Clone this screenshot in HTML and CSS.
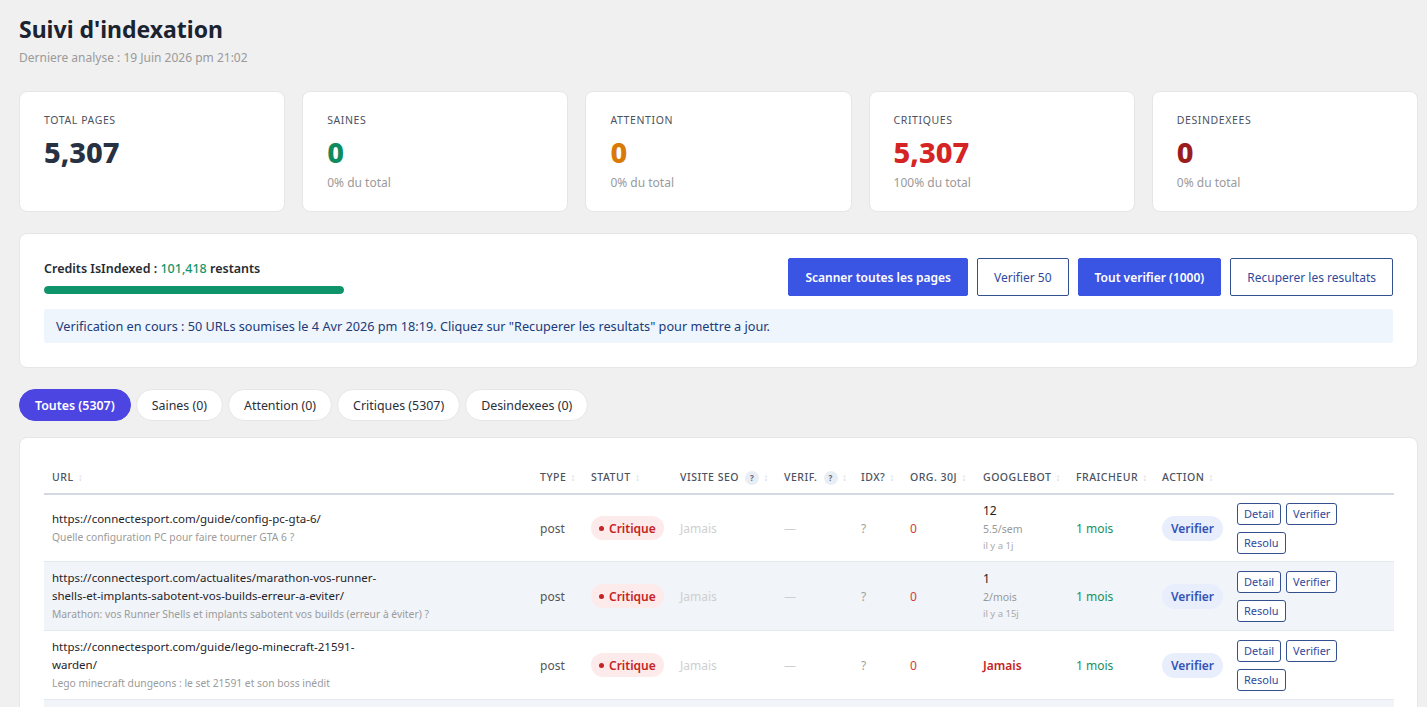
FILE: index.html
```html
<!DOCTYPE html>
<html lang="fr">
<head>
  <meta charset="UTF-8" />
  <meta name="viewport" content="width=device-width, initial-scale=1" />
  <title>Suivi d'indexation</title>
  <link rel="stylesheet" href="styles.css">
</head>
<body>
  <main class="page">

    <header class="page-head">
      <h1>Suivi d'indexation</h1>
      <p class="subtitle">Derniere analyse : 19 Juin 2026 pm 21:02</p>
    </header>

    <section class="stats">
      <div class="stat-card">
        <div class="stat-label">Total pages</div>
        <div class="stat-value">5,307</div>
      </div>
      <div class="stat-card">
        <div class="stat-label">Saines</div>
        <div class="stat-value green">0</div>
        <div class="stat-sub">0% du total</div>
      </div>
      <div class="stat-card">
        <div class="stat-label">Attention</div>
        <div class="stat-value orange">0</div>
        <div class="stat-sub">0% du total</div>
      </div>
      <div class="stat-card">
        <div class="stat-label">Critiques</div>
        <div class="stat-value red">5,307</div>
        <div class="stat-sub">100% du total</div>
      </div>
      <div class="stat-card">
        <div class="stat-label">Desindexees</div>
        <div class="stat-value darkred">0</div>
        <div class="stat-sub">0% du total</div>
      </div>
    </section>

    <section class="card credits">
      <div class="credits-top">
        <div class="credits-info">
          <div class="credits-text">Credits IsIndexed : <span class="credits-num">101,418</span> restants</div>
          <div class="progress"><div class="progress-fill" style="width: 100%"></div></div>
        </div>
        <div class="actions">
          <button class="btn btn-primary">Scanner toutes les pages</button>
          <button class="btn btn-outline">Verifier 50</button>
          <button class="btn btn-primary">Tout verifier (1000)</button>
          <button class="btn btn-outline">Recuperer les resultats</button>
        </div>
      </div>
      <div class="notice">Verification en cours : 50 URLs soumises le 4 Avr 2026 pm 18:19. Cliquez sur "Recuperer les resultats" pour mettre a jour.</div>
    </section>

    <nav class="tabs">
      <button class="tab active">Toutes (5307)</button>
      <button class="tab">Saines (0)</button>
      <button class="tab">Attention (0)</button>
      <button class="tab">Critiques (5307)</button>
      <button class="tab">Desindexees (0)</button>
    </nav>

    <section class="card table-card">
      <table class="pages">
        <colgroup>
          <col style="width: 488px">
          <col style="width: 51px">
          <col style="width: 89px">
          <col style="width: 104px">
          <col style="width: 77px">
          <col style="width: 49px">
          <col style="width: 73px">
          <col style="width: 93px">
          <col style="width: 86px">
          <col style="width: 75px">
          <col style="width: 165px">
        </colgroup>
        <thead>
          <tr>
            <th>URL <span class="sort">↕</span></th>
            <th>Type <span class="sort">↕</span></th>
            <th>Statut <span class="sort">↕</span></th>
            <th>Visite SEO <span class="help">?</span> <span class="sort">↕</span></th>
            <th>Verif. <span class="help">?</span> <span class="sort">↕</span></th>
            <th>Idx? <span class="sort">↕</span></th>
            <th>Org. 30j <span class="sort">↕</span></th>
            <th>Googlebot <span class="sort">↕</span></th>
            <th>Fraicheur <span class="sort">↕</span></th>
            <th>Action <span class="sort">↕</span></th>
            <th></th>
          </tr>
        </thead>
        <tbody>
          <tr>
            <td>
              <div class="url">https://connectesport.com/guide/config-pc-gta-6/</div>
              <div class="url-title">Quelle configuration PC pour faire tourner GTA 6 ?</div>
            </td>
            <td class="muted-dark">post</td>
            <td><span class="badge"><span class="dot"></span>Critique</span></td>
            <td class="faint">Jamais</td>
            <td class="faint">—</td>
            <td class="grey">?</td>
            <td class="zero">0</td>
            <td>
              <div class="bot-count">12</div>
              <div class="bot-rate">5.5/sem</div>
              <div class="bot-last">il y a 1j</div>
            </td>
            <td class="fresh">1 mois</td>
            <td><span class="pill">Verifier</span></td>
            <td>
              <div class="row-btns">
                <button class="mini">Detail</button>
                <button class="mini">Verifier</button>
                <button class="mini">Resolu</button>
              </div>
            </td>
          </tr>
          <tr>
            <td>
              <div class="url">https://connectesport.com/actualites/marathon-vos-runner-shells-et-implants-sabotent-vos-builds-erreur-a-eviter/</div>
              <div class="url-title">Marathon: vos Runner Shells et implants sabotent vos builds (erreur à éviter) ?</div>
            </td>
            <td class="muted-dark">post</td>
            <td><span class="badge"><span class="dot"></span>Critique</span></td>
            <td class="faint">Jamais</td>
            <td class="faint">—</td>
            <td class="grey">?</td>
            <td class="zero">0</td>
            <td>
              <div class="bot-count">1</div>
              <div class="bot-rate">2/mois</div>
              <div class="bot-last">il y a 15j</div>
            </td>
            <td class="fresh">1 mois</td>
            <td><span class="pill">Verifier</span></td>
            <td>
              <div class="row-btns">
                <button class="mini">Detail</button>
                <button class="mini">Verifier</button>
                <button class="mini">Resolu</button>
              </div>
            </td>
          </tr>
          <tr>
            <td>
              <div class="url">https://connectesport.com/guide/lego-minecraft-21591-warden/</div>
              <div class="url-title">Lego minecraft dungeons : le set 21591 et son boss inédit</div>
            </td>
            <td class="muted-dark">post</td>
            <td><span class="badge"><span class="dot"></span>Critique</span></td>
            <td class="faint">Jamais</td>
            <td class="faint">—</td>
            <td class="grey">?</td>
            <td class="zero">0</td>
            <td class="never">Jamais</td>
            <td class="fresh">1 mois</td>
            <td><span class="pill">Verifier</span></td>
            <td>
              <div class="row-btns">
                <button class="mini">Detail</button>
                <button class="mini">Verifier</button>
                <button class="mini">Resolu</button>
              </div>
            </td>
          </tr>
          <tr>
            <td>
              <div class="url">https://connectesport.com/guide/meilleurs-reglages-manette-fortnite/</div>
              <div class="url-title">Les meilleurs reglages manette sur Fortnite</div>
            </td>
            <td class="muted-dark">post</td>
            <td><span class="badge"><span class="dot"></span>Critique</span></td>
            <td class="faint">Jamais</td>
            <td class="faint">—</td>
            <td class="grey">?</td>
            <td class="zero">0</td>
            <td class="never">Jamais</td>
            <td class="fresh">1 mois</td>
            <td><span class="pill">Verifier</span></td>
            <td>
              <div class="row-btns">
                <button class="mini">Detail</button>
                <button class="mini">Verifier</button>
                <button class="mini">Resolu</button>
              </div>
            </td>
          </tr>
        </tbody>
      </table>
    </section>

  </main>
</body>
</html>
```

FILE: styles.css
```css
/* Base */
* {
  box-sizing: border-box;
}

html, body {
  margin: 0;
  overflow: hidden;
}

body {
  font-family: "Noto Sans", "Open Sans", Arial, sans-serif;
  background: #f0f0f0;
  color: #222;
  font-size: 13px;
}

button {
  font-family: inherit;
  cursor: pointer;
}

.page {
  padding: 14px 9px 0 19px;
}

/* En-tete */
.page-head h1 {
  margin: 0;
  font-size: 23px;
  line-height: 30px;
  font-weight: 700;
  color: #1b2230;
}

.subtitle {
  margin: 6px 0 0;
  font-size: 12px;
  line-height: 16px;
  color: #9a9a9a;
}

/* Cartes stats */
.stats {
  display: grid;
  grid-template-columns: repeat(5, 1fr);
  gap: 17px;
  margin-top: 25px;
}

.stat-card {
  background: white;
  border: 1px solid #e4e6e9;
  border-radius: 8px;
  height: 121px;
  padding: 21px 24px;
}

.stat-label {
  font-size: 10.5px;
  line-height: 14px;
  letter-spacing: 0.6px;
  text-transform: uppercase;
  color: #4b5260;
}

.stat-value {
  margin-top: 7px;
  font-size: 29px;
  line-height: 36px;
  font-weight: 800;
  color: #283142;
}

.stat-value.green { color: #0f8c5f; }
.stat-value.orange { color: #d97a08; }
.stat-value.red { color: #d42424; }
.stat-value.darkred { color: #9b1c1c; }

.stat-sub {
  margin-top: 5px;
  font-size: 12px;
  line-height: 16px;
  color: #9a9a9a;
}

/* Carte credits */
.card {
  background: white;
  border: 1px solid #e4e6e9;
  border-radius: 8px;
}

.credits {
  margin-top: 21px;
  padding: 24px;
}

.credits-top {
  display: flex;
  justify-content: space-between;
  align-items: flex-start;
}

.credits-info {
  padding-top: 2px;
}

.credits-text {
  font-size: 12.5px;
  line-height: 18px;
  font-weight: 600;
  color: #262b33;
}

.credits-num {
  color: #17946a;
  font-weight: 500;
}

.progress {
  margin-top: 8px;
  width: 300px;
  height: 8px;
  border-radius: 4px;
  background: #e5e7eb;
  overflow: hidden;
}

.progress-fill {
  height: 100%;
  background: #0f936a;
  border-radius: 4px;
}

.actions {
  display: flex;
  gap: 9px;
}

.btn {
  height: 38px;
  padding: 0 16px;
  font-size: 12px;
  border-radius: 2px;
}

.btn-primary {
  background: #3a55e3;
  border: 1px solid #3a55e3;
  color: white;
  font-weight: 600;
}

.btn-outline {
  background: white;
  border: 1px solid #33508f;
  color: #2f4a9c;
}

.notice {
  margin-top: 13px;
  background: #eef5fd;
  border-radius: 3px;
  padding: 0 12px;
  line-height: 34px;
  font-size: 12.7px;
  color: #213a78;
}

/* Onglets */
.tabs {
  display: flex;
  gap: 5px;
  margin-top: 21px;
}

.tab {
  height: 32px;
  padding: 0 15px;
  border-radius: 16px;
  border: 1px solid #e6e6e6;
  background: white;
  font-size: 12.4px;
  color: #2a2f38;
}

.tab.active {
  background: #4d45e2;
  border-color: #4d45e2;
  color: white;
  font-weight: 600;
}

/* Tableau */
.table-card {
  margin-top: 16px;
  padding: 24px 24px 0;
}

.pages {
  width: 100%;
  table-layout: fixed;
  border-collapse: collapse;
}

.pages th {
  text-align: left;
  font-size: 10.5px;
  font-weight: 500;
  letter-spacing: 0.5px;
  text-transform: uppercase;
  color: #4b5260;
  padding: 8px;
  line-height: 15px;
  border-bottom: 2px solid #d3d9e1;
  white-space: nowrap;
}

.sort {
  color: #d4d8de;
  font-size: 10px;
  margin-left: 1px;
}

.help {
  display: inline-block;
  width: 14px;
  height: 14px;
  line-height: 14px;
  border-radius: 50%;
  background: #e9eef5;
  color: #5a6a85;
  font-size: 8px;
  font-weight: 700;
  text-align: center;
  margin-left: 3px;
}

.pages td {
  padding: 7px 8px;
  vertical-align: middle;
  border-bottom: 1px solid #e5e9ef;
  font-size: 12px;
}

.pages tbody tr:nth-child(even) td {
  background: #f1f4f8;
}

.url {
  max-width: 335px;
  font-size: 11.5px;
  line-height: 18px;
  color: #1f2329;
}

.url-title {
  font-size: 10.3px;
  line-height: 18px;
  color: #9b9b9b;
}

.muted-dark { color: #555; }
.faint { color: #cfcfcf; font-size: 11px; }
.grey { color: #a0a0a0; }
.zero { color: #d63a3a; }

.badge {
  display: inline-flex;
  align-items: center;
  gap: 5px;
  height: 24px;
  padding: 0 8px;
  border-radius: 12px;
  background: #fdeaea;
  color: #c42424;
  font-weight: 600;
  font-size: 12px;
}

.dot {
  width: 5px;
  height: 5px;
  border-radius: 50%;
  background: #c42424;
}

.bot-count {
  font-size: 12px;
  line-height: 18px;
  color: #222;
}

.bot-rate {
  font-size: 10.5px;
  line-height: 18px;
  color: #999;
}

.bot-last {
  font-size: 9.5px;
  line-height: 16px;
  color: #aaa;
}

.never {
  color: #c42424;
  font-weight: 600;
}

.fresh { color: #16905e; }

.pill {
  display: inline-block;
  padding: 0 9px;
  height: 25px;
  line-height: 25px;
  border-radius: 13px;
  background: #e8eefb;
  color: #3553b5;
  font-weight: 600;
  font-size: 12px;
}

.row-btns {
  display: flex;
  flex-wrap: wrap;
  gap: 7px 5px;
  width: 110px;
}

.mini {
  height: 22px;
  padding: 0 6px;
  background: white;
  border: 1px solid #34508e;
  border-radius: 3px;
  color: #2f4a9c;
  font-size: 11px;
}
```
